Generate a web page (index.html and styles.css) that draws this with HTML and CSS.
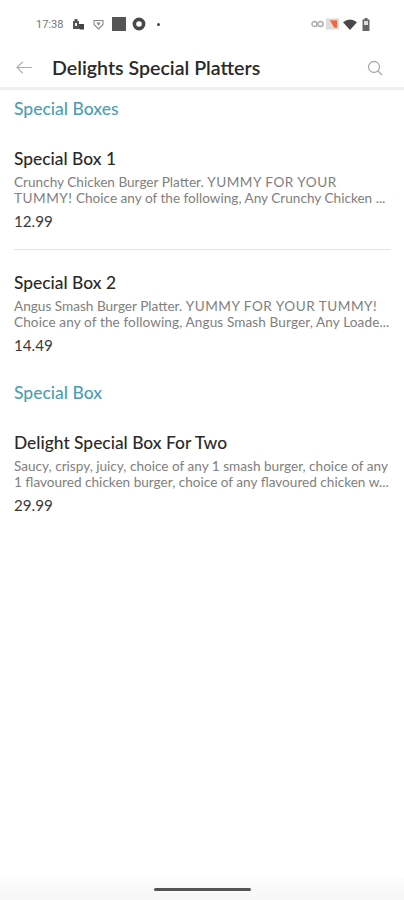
FILE: index.html
```html
<!DOCTYPE html>
<html lang="en">
<head>
  <meta charset="UTF-8" />
  <meta name="viewport" content="width=device-width, initial-scale=1.0"/>
  <title>Delights Special Platters</title>
  <link rel="stylesheet" href="styles.css">
</head>
<body>
  <div class="screen">
    <div class="status-bar">
      <div class="status-left">
        <span class="clock">17:38</span>
        <svg width="11" height="12" viewBox="0 0 11 12"><path d="M0 3h6v8H0zM1.500 3V1h3v2" fill="#555"/><path d="M6 6h5v5.500H7L6 10.500z" fill="#444"/><rect x="2" y="5" width="2" height="3" fill="#eee"/></svg>
        <svg class="shield" width="11" height="11" viewBox="0 0 11 11"><path d="M1 1.500h9v4L5.500 10 1 5.500z" fill="none" stroke="#888" stroke-width="1.100"/><path d="M3.500 3.500h4L5.500 7z" fill="#888"/></svg>
        <span class="square"></span>
        <svg class="ring" width="14" height="14" viewBox="0 0 14 14"><circle cx="7" cy="7" r="4.600" fill="none" stroke="#484848" stroke-width="3.600"/><path d="M9 1l3.500 3L9 5z" fill="#484848"/></svg>
        <span class="dot"></span>
      </div>
      <div class="status-right">
        <svg width="13" height="8" viewBox="0 0 13 8"><circle cx="3.500" cy="4" r="2.500" fill="none" stroke="#aaa" stroke-width="1.400"/><circle cx="9.500" cy="4" r="2.500" fill="none" stroke="#aaa" stroke-width="1.400"/></svg>
        <svg width="13" height="12" viewBox="0 0 14 12"><rect width="14" height="12" fill="#ddd"/><path d="M4 2h8v8H9z" fill="#ee6a3c"/></svg>
        <svg class="wifi" width="14" height="11" viewBox="0 0 14 11"><path d="M0 3.200Q7-2 14 3.200L7 11z" fill="#484848"/></svg>
        <svg class="battery" width="8" height="13" viewBox="0 0 7 13"><path d="M2 0h3v1.500h2V13H0V1.500h2z" fill="#666"/><rect x="1.500" y="3" width="4" height="4" fill="#ddd"/></svg>
      </div>
    </div>

    <header class="app-bar">
      <svg width="16" height="13" viewBox="0 0 16 13"><path d="M16 6.500H1M6.800 .7L1 6.500l5.800 5.800" fill="none" stroke="#adadad" stroke-width="1.200"/></svg>
      <h1>Delights Special Platters</h1>
      <svg width="16" height="16" viewBox="0 0 16 16"><circle cx="7" cy="7" r="5.500" fill="none" stroke="#aaa" stroke-width="1.300"/><path d="M11 11l4 4" stroke="#aaa" stroke-width="1.500"/></svg>
    </header>

    <main class="menu">
      <h2 class="section-title">Special Boxes</h2>

      <div class="item item-line">
        <h3>Special Box 1</h3>
        <p class="desc">Crunchy Chicken Burger Platter. <span class="caps">YUMMY FOR YOUR</span><br><span class="caps">TUMMY!</span> Choice any of the following, Any Crunchy Chicken ...</p>
        <p class="price">12.99</p>
      </div>

      <div class="item">
        <h3>Special Box 2</h3>
        <p class="desc">Angus Smash Burger Platter. <span class="caps">YUMMY FOR YOUR TUMMY!</span><br><span class="wide">Choice any of the following, Angus Smash Burger, Any Loade...</span></p>
        <p class="price">14.49</p>
      </div>

      <h2 class="section-title second">Special Box</h2>

      <div class="item">
        <h3>Delight Special Box For Two</h3>
        <p class="desc">Saucy, crispy, juicy, choice of any 1 smash burger, choice of any 1 flavoured chicken burger, choice of any flavoured chicken w...</p>
        <p class="price">29.99</p>
      </div>
    </main>

    <div class="nav-bar"><span class="handle"></span></div>
  </div>
</body>
</html>
```

FILE: styles.css
```css
* {
  margin: 0;
  padding: 0;
  box-sizing: border-box;
  font-family: 'Lato', sans-serif;
}

html, body {
  width: 100%;
  height: 100%;
  background: #fff;
}

.screen {
  height: 900px;
  display: flex;
  flex-direction: column;
  overflow: hidden;
}

.status-bar {
  height: 48px;
  padding: 0 34px 0 36px;
  display: flex;
  justify-content: space-between;
  align-items: center;
  flex-shrink: 0;
}

.status-left, .status-right {
  display: flex;
  align-items: center;
}

.status-left {
  gap: 7px;
}

.status-right {
  gap: 2px;
}

.clock {
  font-family: 'Roboto', sans-serif;
  font-size: 11px;
  color: #777;
  margin-right: 3px;
}

.shield {
  margin: 0 1px 0 2px;
}

.square {
  width: 14px;
  height: 14px;
  background: #555;
}

.ring {
  margin-left: -1px;
}

.dot {
  width: 3px;
  height: 3px;
  margin-left: 4px;
  border-radius: 50%;
  background: #444;
}

.wifi {
  margin-left: 2px;
}

.battery {
  margin-left: 3px;
}

.app-bar {
  height: 42px;
  padding: 0 21px 0 16px;
  display: flex;
  align-items: center;
  background: #fff;
  border-bottom: 3px solid #efefef;
  flex-shrink: 0;
}

.app-bar h1 {
  flex: 1;
  margin-left: 20px;
  font-size: 19.600px;
  font-weight: 600;
  color: #2a2a2a;
}

.menu {
  flex: 1;
  padding: 0 13px 0 14px;
}

.section-title {
  font-size: 17.500px;
  font-weight: 500;
  line-height: 20px;
  margin-top: 9px;
  color: #4a9fb5;
}

.section-title.second {
  margin-top: 29px;
}

.item {
  padding-top: 30px;
}

.item-line {
  padding-bottom: 19px;
  border-bottom: 1px solid #e4e4e4;
}

.item-line + .item {
  padding-top: 23px;
}

.item h3 {
  font-size: 17.400px;
  font-weight: 500;
  line-height: 20px;
  color: #2a2a2a;
}

.desc {
  margin-top: 5px;
  font-size: 13.600px;
  line-height: 16px;
  color: #808080;
}

.caps {
  letter-spacing: 0.5px;
}

.wide {
  letter-spacing: 0.1px;
}

.price {
  margin-top: 6px;
  font-size: 15.200px;
  line-height: 18px;
  color: #3a3a3a;
}

.nav-bar {
  height: 22px;
  display: flex;
  justify-content: center;
  padding-top: 10px;
  background: linear-gradient(#fdfdfd, #f6f6f6);
  flex-shrink: 0;
}

.handle {
  width: 97px;
  height: 3px;
  background: #555;
  border-radius: 2px;
}
```
